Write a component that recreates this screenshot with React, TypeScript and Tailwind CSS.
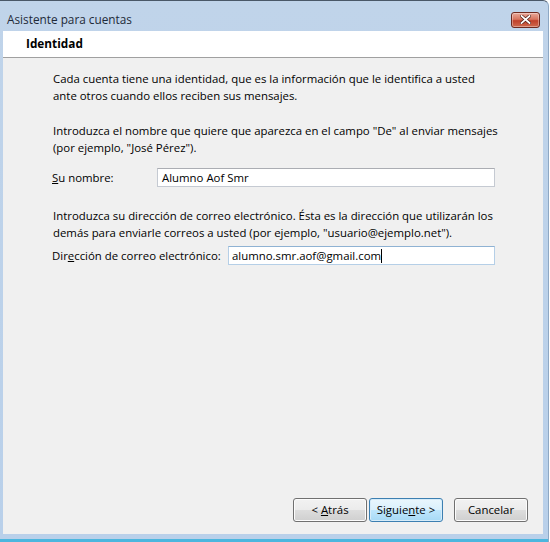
import React from 'react';

const font = { fontFamily: '"Open Sans", "Noto Sans", sans-serif' };

const WizButton = ({ children, focused = false, className = '' }: { children: React.ReactNode; focused?: boolean; className?: string }) => {
  return <button type="button" className={`h-[24px] w-[74px] rounded-[3px] border text-[11.4px] leading-none text-black whitespace-nowrap ${focused ? 'border-[#3c7fb1] bg-[linear-gradient(#eaf6fd_0%,#d9f0fc_50%,#bee6fd_51%,#a7d9f5_100%)] shadow-[inset_0_0_0_1px_#d6ecf9]' : 'border-[#707070] bg-[linear-gradient(#f2f2f2_0%,#ebebeb_50%,#dddddd_51%,#cfcfcf_100%)] shadow-[inset_0_0_0_1px_#fcfcfc]'} ${className}`}>
      {children}
    </button>;
};

const App = () => {
  return <div className="w-[550px] h-[542px] bg-white overflow-hidden" style={font}>
      {/* Window frame */}
      <div className="w-[549px] h-[542px] flex flex-col rounded-tr-[6px] border-t border-t-[#4a5868] border-r border-r-[#8ea8c4] bg-[linear-gradient(#c0d4ea,#b9d0ea)]">
        {/* Title bar */}
        <div className="h-[30px] flex items-center justify-between pl-[7px] pr-[8px] shrink-0">
          <span className="text-[11.8px] text-[#1e2a38] pt-[7px]">Asistente para cuentas</span>
          <div className="mt-[7px] w-[29px] h-[16px] rounded-[3px] border border-[#6e2a20] bg-[linear-gradient(#e9a99a_0%,#d7755f_45%,#c0402a_55%,#cf6a4f_100%)] flex items-center justify-center shadow-[inset_0_0_0_1px_rgba(255,255,255,0.35)]">
            <svg width="11" height="9" viewBox="0 0 11 9">
              <path d="M1.5 1 L9.5 8 M9.5 1 L1.5 8" stroke="#4a1a12" strokeWidth="3.2" strokeLinecap="square" />
              <path d="M1.5 1 L9.5 8 M9.5 1 L1.5 8" stroke="#ffffff" strokeWidth="1.8" strokeLinecap="square" />
            </svg>
          </div>
        </div>

        {/* Client area */}
        <div className="ml-[3px] mr-[5px] flex-1 flex flex-col bg-[#f0f0f0] text-black">
          <div className="h-[27px] bg-white border-b border-[#a0a0a0] flex items-center pl-[23px] shrink-0">
            <span className="text-[11.8px] font-bold">Identidad</span>
          </div>

          <div className="flex-1 flex flex-col pl-[50px] text-[11.4px] leading-[17px] whitespace-nowrap">
            <p className="mt-[12px]">
              Cada cuenta tiene una identidad, que es la información que le identifica a usted
              <br />
              ante otros cuando ellos reciben sus mensajes.
            </p>

            <p className="mt-[18px]">
              Introduzca el nombre que quiere que aparezca en el campo "De" al enviar mensajes
              <br />
              (por ejemplo, "José Pérez").
            </p>

            <div className="mt-[12px] flex items-center">
              <label className="w-[105px] -ml-[1px]"><span className="underline">S</span>u nombre:</label>
              <div className="w-[338px] h-[19px] bg-white border border-[#c5cad2] border-t-[#abadb3] pl-[4px] flex items-center">
                Alumno Aof Smr
              </div>
            </div>

            <p className="mt-[20px]">
              Introduzca su dirección de correo electrónico. Ésta es la dirección que utilizarán los
              <br />
              demás para enviarle correos a usted (por ejemplo, "usuario@ejemplo.net").
            </p>

            <div className="mt-[5px] flex items-center">
              <label className="w-[176px] -ml-[1px]">Dir<span className="underline">e</span>cción de correo electrónico:</label>
              <div className="w-[267px] h-[19px] bg-white border border-[#b5cfe7] border-t-[#8fb2d3] pl-[3px] flex items-center">
                alumno.smr.aof@gmail.com<span className="inline-block w-px h-[14px] bg-black" />
              </div>
            </div>

            <div className="flex-1" />
          </div>

          <div className="flex items-center justify-end pr-[15px] pb-[12px] shrink-0">
            <WizButton><span>&lt; </span><span className="underline">A</span>trás</WizButton>
            <WizButton focused className="ml-[2px]">Siguie<span className="underline">n</span>te &gt;</WizButton>
            <WizButton className="ml-[11px]">Cancelar</WizButton>
          </div>
        </div>

        {/* Bottom frame */}
        <div className="h-[5px] shrink-0" />
        <div className="h-[3px] shrink-0 bg-[#4cb6de]" />
      </div>
    </div>;
};

export default App;
